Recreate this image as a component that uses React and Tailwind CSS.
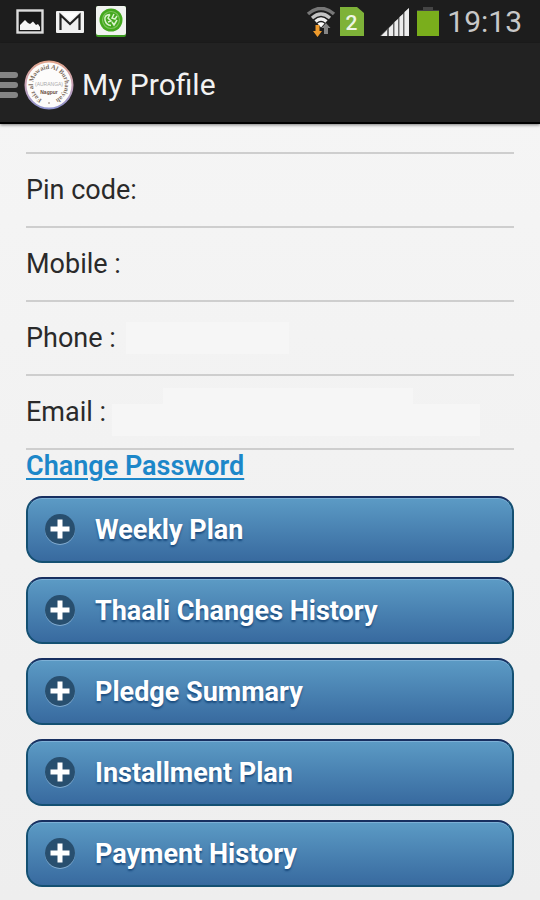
import React from "react";

const SECTIONS = [
  "Weekly Plan",
  "Thaali Changes History",
  "Pledge Summary",
  "Installment Plan",
  "Payment History",
];

function PictureIcon() {
  return (
    <svg width="28" height="25" viewBox="0 0 28 25" aria-hidden="true">
      <rect x="1.5" y="1.5" width="25" height="22" fill="#181818" stroke="#dcdcdc" strokeWidth="2.4" />
      <path d="M4 21V16L7 13L9 11L12 14L14 15L17 12.5L20 16L22 15L24 18V21Z" fill="#f4f4f4" />
    </svg>
  );
}

function MailIcon() {
  return (
    <svg width="28" height="22" viewBox="0 0 28 22" aria-hidden="true">
      <rect width="28" height="22" rx="1" fill="#f0f0f0" />
      <path d="M4.500 19V4L14 13L23.500 4V19" fill="none" stroke="#222" strokeWidth="2.200" />
      <path d="M5 1.500H23L14 9.500Z" fill="#fff" />
    </svg>
  );
}

function GreenAppIcon() {
  return (
    <svg width="30" height="31" viewBox="0 0 30 31" aria-hidden="true">
      <rect width="30" height="31" rx="2" fill="#3c9a20" />
      <rect width="30" height="29" rx="2" fill="#f1f3f0" />
      <circle cx="15" cy="14" r="11.500" fill="#43a81e" />
      <circle cx="15" cy="14" r="8.500" fill="none" stroke="#7cc45c" strokeWidth="1.200" />
      <path d="M14 8.500Q8 9 9 14Q10 19 15 19.500M14 8.500L12 12L15 15L12 16M18 8L16 12L19 13L21 10M21 14L18 19L16 16" fill="none" stroke="#d9f2cc" strokeWidth="1.500" />
    </svg>
  );
}

function WifiIcon() {
  return (
    <svg width="30" height="30" viewBox="0 0 30 30" aria-hidden="true">
      <g fill="none">
        <path d="M2 7Q15 -4 28 7" stroke="#777" strokeWidth="3.600" />
        <path d="M6 11Q15 3 24 11" stroke="#c4c4c4" strokeWidth="3.200" />
        <path d="M9.500 14.500Q15 9.500 20.500 14.500" stroke="#eeeeee" strokeWidth="3.200" />
      </g>
      <path d="M11.500 16.500Q15 14 18.500 16.500L15 20.500Z" fill="#fff" />
      <path d="M9.500 18H13.500V24H16L11.500 30L7 24H9.500Z" fill="#ee9a2c" />
      <path d="M18 27V21H15.500L20 16L24.500 21H22V27Z" fill="#858585" />
    </svg>
  );
}

function SimIcon() {
  return (
    <svg width="24" height="29" viewBox="0 0 24 29" aria-hidden="true">
      <path d="M0 0H17L24 6V29H0Z" fill="#7eb238" />
      <text x="11.500" y="23" textAnchor="middle" fill="#eef5e4" fontFamily="Roboto, sans-serif" fontSize="21" fontWeight="500">2</text>
    </svg>
  );
}

function SignalIcon() {
  return (
    <svg width="29" height="28" viewBox="0 0 29 28" aria-hidden="true">
      <path d="M0 28L29 0V28Z" fill="#666" />
      <path d="M1 28L7 22V28ZM9 28V20L13 16V28ZM14.500 28V14L18 11V28ZM19.500 28V9L23 6V28ZM24.500 28V4L29 0V28Z" fill="#ededed" />
    </svg>
  );
}

function BatteryIcon() {
  return (
    <svg width="22" height="29" viewBox="0 0 22 29" aria-hidden="true">
      <path d="M6 0H16V3H22V5H0V3H6Z" fill="#444" />
      <rect y="4" width="22" height="25" fill="#7aae1c" />
    </svg>
  );
}

function Seal() {
  return (
    <svg width="50" height="50" viewBox="0 0 50 50" role="img" aria-label="Logo">
      <defs>
        <linearGradient id="sealRim" x1="0" y1="0" x2="0" y2="1">
          <stop offset="0" stopColor="#e0a48c" />
          <stop offset="0.5" stopColor="#c9a3b8" />
          <stop offset="1" stopColor="#8f94cf" />
        </linearGradient>
        <path id="sealArc" d="M18 39.300A16 16 0 1 1 32 39.300" />
      </defs>
      <circle cx="25" cy="25" r="23.500" fill="#fdfcfb" stroke="url(#sealRim)" strokeWidth="2" />
      <text fill="#7a6b5e" fontFamily="Liberation Serif, serif" fontSize="6.500" fontWeight="700">
        <textPath href="#sealArc">Faiz al Mawaid Al Burhaniyah</textPath>
      </text>
      <text x="25" y="26" textAnchor="middle" fill="#a9a9a9" fontFamily="Liberation Sans, sans-serif" fontSize="5">(AURANGA)</text>
      <text x="25" y="34" textAnchor="middle" fill="#6a4c3c" fontFamily="Liberation Sans, sans-serif" fontSize="5" fontWeight="700">Nagpur</text>
      <circle cx="25" cy="43" r="0.800" fill="#7d6a5c" />
    </svg>
  );
}

function PlusIcon() {
  return (
    <svg width="32" height="33" viewBox="0 0 32 33" className="shrink-0" aria-hidden="true">
      <circle cx="16" cy="17" r="15" fill="#82acd0" />
      <circle cx="16" cy="16" r="15" fill="#284f6f" />
      <path d="M13.500 6.500H18.500V13.500H25.500V18.500H18.500V25.500H13.500V18.500H6.500V13.500H13.500Z" fill="#fff" />
    </svg>
  );
}

function StatusBar() {
  return (
    <div className="flex h-[43px] items-center justify-between bg-[#1d1d1d] pl-4 pr-[18px]">
      <div className="flex items-center gap-3">
        <PictureIcon />
        <MailIcon />
        <GreenAppIcon />
      </div>
      <div className="flex items-center">
        <WifiIcon />
        <div className="ml-1"><SimIcon /></div>
        <div className="ml-4"><SignalIcon /></div>
        <div className="ml-2"><BatteryIcon /></div>
        <time className="ml-2 text-[30px] leading-10 text-[#c8c8c8]">19:13</time>
      </div>
    </div>
  );
}

function Field({ label, children }) {
  return (
    <div className="flex h-[74px] items-center border-b-2 border-[#cecece]">
      <dt className="text-[27px] leading-8 text-[#2a2a2a]">{label}</dt>
      <dd className="flex-1">{children}</dd>
    </div>
  );
}

export default function App() {
  return (
    <div className="min-h-screen bg-linear-to-b from-[#f6f6f6] to-[#eeeeee] font-[Roboto,sans-serif]">
      <StatusBar />
      <header className="flex h-[81px] items-center border-b-2 border-black bg-[#222222] pt-1 shadow-[0_1px_3px_rgba(0,0,0,0.5)]">
        <button type="button" aria-label="Menu" className="flex w-[18px] flex-col gap-1">
          <span className="h-[6px] rounded-r-sm bg-[#858585]" />
          <span className="h-[6px] rounded-r-sm bg-[#858585]" />
          <span className="h-[6px] rounded-r-sm bg-[#858585]" />
        </button>
        <div className="ml-[6px]"><Seal /></div>
        <h1 className="ml-2 text-[30px] leading-10 text-[#f2f2f2]">My Profile</h1>
      </header>
      <main className="px-[26px] pb-3 pt-7">
        <dl className="border-t-2 border-[#cecece]">
          <Field label="Pin code:" />
          <Field label="Mobile :" />
          <Field label="Phone :">
            <div className="ml-[10px] h-8 w-[163px] bg-[#f6f6f6]" />
          </Field>
          <Field label="Email :">
            <div className="ml-[6px] mr-[34px]">
              <div className="ml-[51px] mr-[67px] h-4 bg-[#f6f6f6]" />
              <div className="h-8 bg-[#f6f6f6]" />
            </div>
          </Field>
        </dl>
        <a href="#password" className="inline-block align-top text-[27px] font-semibold leading-8 text-[#1c87c9] underline decoration-2 underline-offset-3">
          Change Password
        </a>
        <div className="mt-[14px] flex flex-col gap-[14px]">
          {SECTIONS.map((title) => (
            <button
              key={title}
              type="button"
              aria-expanded="false"
              className="flex h-[67px] w-full items-center gap-[19px] rounded-2xl border-2 border-[#145072] border-t-[#172f60] bg-linear-to-b from-[#5c9bc5] to-[#386a9f] pl-4 text-left text-[27px] font-bold leading-8 text-white shadow-[inset_0_1px_0_#7db0d6] [text-shadow:0_2px_2px_#194b7e]"
            >
              <PlusIcon />
              {title}
            </button>
          ))}
        </div>
      </main>
    </div>
  );
}
